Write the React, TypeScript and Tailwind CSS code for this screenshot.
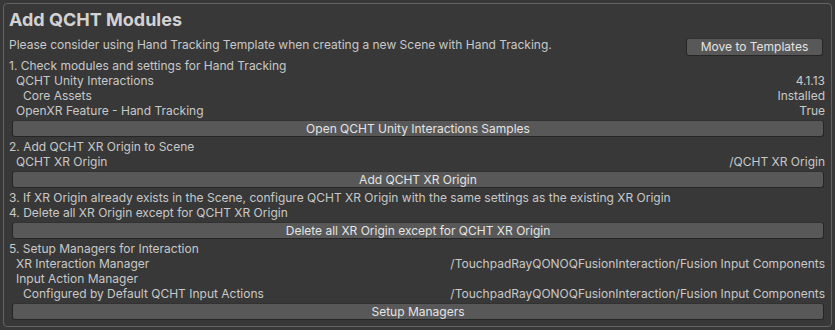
import React from "react";

const font = { fontFamily: "Inter, 'Noto Sans', sans-serif" };

function Row({ label, value, indent = 0 }: { label: string; value?: string; indent?: number }) {
  const pad = indent === 0 ? "pl-0" : indent === 1 ? "pl-[7px]" : "pl-[14px]";
  return (
    <div className="flex h-[15px] items-center justify-between leading-[15px] text-[12px] text-[#c8c8c8] whitespace-nowrap">
      <span className={pad}>{label}</span>
      {value && <span>{value}</span>}
    </div>
  );
}

function Btn({ children }: { children: React.ReactNode }) {
  return (
    <div className="ml-[3px] mr-[1px] my-[2px] flex h-[17px] items-center justify-center rounded-[3px] border border-[#262626] border-t-[#323232] bg-[#585858] text-[12px] leading-[15px] text-[#e4e4e4]">
      {children}
    </div>
  );
}

export default function App() {
  const path = "/TouchpadRayQONOQFusionInteraction/Fusion Input Components";
  return (
    <div className="w-[835px] h-[330px] bg-[#383838] p-[3px]" style={font}>
      <div className="h-[324px] rounded-[4px] border border-[#636363] bg-[#383838] pl-[5px] pr-[6px] pt-[6px] pb-[6px]">
        <div className="h-[20px] leading-[20px] text-[18px] font-bold text-[#d2d2d2]">Add QCHT Modules</div>
        <div className="mt-[7px] flex items-start justify-between">
          <span className="h-[15px] leading-[15px] text-[12px] text-[#c8c8c8]">
            Please consider using Hand Tracking Template when creating a new Scene with Hand Tracking.
          </span>
          <div className="mt-px mr-[2px] flex h-[18px] w-[137px] items-center justify-center rounded-[3px] border border-[#262626] border-t-[#323232] bg-[#585858] text-[12px] text-[#e4e4e4]">
            Move to Templates
          </div>
        </div>
        <div className="mt-[2px]">
          <Row label="1. Check modules and settings for Hand Tracking" />
          <Row label="QCHT Unity Interactions" value="4.1.13" indent={1} />
          <Row label="Core Assets" value="Installed" indent={2} />
          <Row label="OpenXR Feature - Hand Tracking" value="True" indent={1} />
          <Btn>Open QCHT Unity Interactions Samples</Btn>
          <Row label="2. Add QCHT XR Origin to Scene" />
          <Row label="QCHT XR Origin" value="/QCHT XR Origin" indent={1} />
          <Btn>Add QCHT XR Origin</Btn>
          <Row label="3. If XR Origin already exists in the Scene, configure QCHT XR Origin with the same settings as the existing XR Origin" />
          <Row label="4. Delete all XR Origin except for QCHT XR Origin" />
          <Btn>Delete all XR Origin except for QCHT XR Origin</Btn>
          <Row label="5. Setup Managers for Interaction" />
          <Row label="XR Interaction Manager" value={path} indent={1} />
          <Row label="Input Action Manager" indent={1} />
          <Row label="Configured by Default QCHT Input Actions" value={path} indent={2} />
          <Btn>Setup Managers</Btn>
        </div>
      </div>
    </div>
  );
}
